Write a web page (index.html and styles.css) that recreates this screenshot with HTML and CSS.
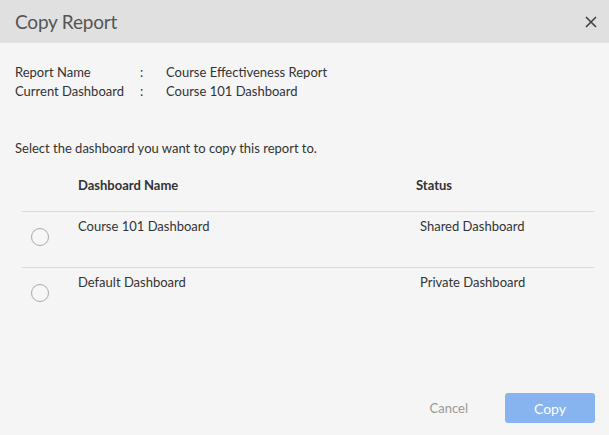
FILE: index.html
```html
<!DOCTYPE html>
<html>
<head>
<meta charset="utf-8">
<link rel="stylesheet" href="styles.css">
</head>
<body>
<div class="dialog">
  <div class="header">
    <h1 class="title">Copy Report</h1>
    <button class="close" aria-label="Close">
      <svg width="12" height="12" viewBox="0 0 12 12"><path d="M1 1L11 11M11 1L1 11" stroke="#444" stroke-width="1.7" fill="none"/></svg>
    </button>
  </div>
  <div class="body">
    <div class="info">
      <div class="info-row"><span class="label">Report Name</span><span class="colon">:</span><span class="value">Course Effectiveness Report</span></div>
      <div class="info-row"><span class="label">Current Dashboard</span><span class="colon">:</span><span class="value">Course 101 Dashboard</span></div>
    </div>
    <p class="prompt">Select the dashboard you want to copy this report to.</p>
    <div class="table">
      <div class="thead">
        <span class="col-name">Dashboard Name</span>
        <span class="col-status">Status</span>
      </div>
      <div class="trow">
        <span class="radio"></span>
        <span class="col-name">Course 101 Dashboard</span>
        <span class="col-status cell">Shared Dashboard</span>
      </div>
      <div class="trow">
        <span class="radio"></span>
        <span class="col-name">Default Dashboard</span>
        <span class="col-status cell">Private Dashboard</span>
      </div>
    </div>
  </div>
  <div class="footer">
    <button class="btn-cancel">Cancel</button>
    <button class="btn-copy">Copy</button>
  </div>
</div>
</body>
</html>
```
FILE: styles.css
```css
* { box-sizing: border-box; }
html, body { margin: 0; padding: 0; }
body {
  width: 609px;
  height: 435px;
  background: #f5f5f5;
  font-family: "Lato", "Open Sans", sans-serif;
  font-size: 13px;
  color: #333;
  overflow: hidden;
}
.dialog { display: flex; flex-direction: column; height: 435px; }
.header {
  height: 43px;
  background: #e0e0e0;
  display: flex;
  align-items: center;
  justify-content: space-between;
  padding: 0 12px 0 15px;
}
.title {
  margin: 0;
  font-size: 19px;
  font-weight: 400;
  color: #555;
  letter-spacing: -0.2px;
}
.close {
  border: 0;
  background: none;
  padding: 0;
  width: 12px;
  height: 12px;
  display: flex;
}
.body { padding: 20px 15px 0 15px; flex: 1; }
.info-row { display: flex; line-height: 19px; }
.label { width: 125px; }
.colon { width: 26px; }
.prompt { margin: 38px 0 0 0; line-height: 19px; }
.table { margin-top: 11px; margin-left: 7px; }
.thead {
  display: flex;
  height: 43px;
  padding-top: 8px;
  font-weight: 700;
  border-bottom: 1px solid #dcdcdc;
}
.thead .col-name { width: 394px; padding-left: 56px; flex: none; }
.trow {
  display: flex;
  height: 56px;
  padding-top: 6px;
  border-bottom: 1px solid #dcdcdc;
}
.trow:last-child { border-bottom: 0; }
.trow .col-name { width: 342px; flex: none; }
.radio {
  width: 18px;
  height: 18px;
  border: 1px solid #aaa;
  border-radius: 50%;
  margin: 10px 29px 0 9px;
  flex: none;
  background: #f7f7f7;
}
.footer {
  display: flex;
  justify-content: flex-end;
  align-items: center;
  padding: 0 14px 12px 0;
  gap: 37px;
}
.btn-cancel {
  border: 0;
  background: none;
  font: inherit;
  color: #999;
  padding: 0;
}
.btn-copy {
  width: 90px;
  height: 30px;
  border: 0;
  border-radius: 3px;
  background: #87b4ee;
  color: #fff;
  font: inherit;
  font-size: 14px;
}
```
